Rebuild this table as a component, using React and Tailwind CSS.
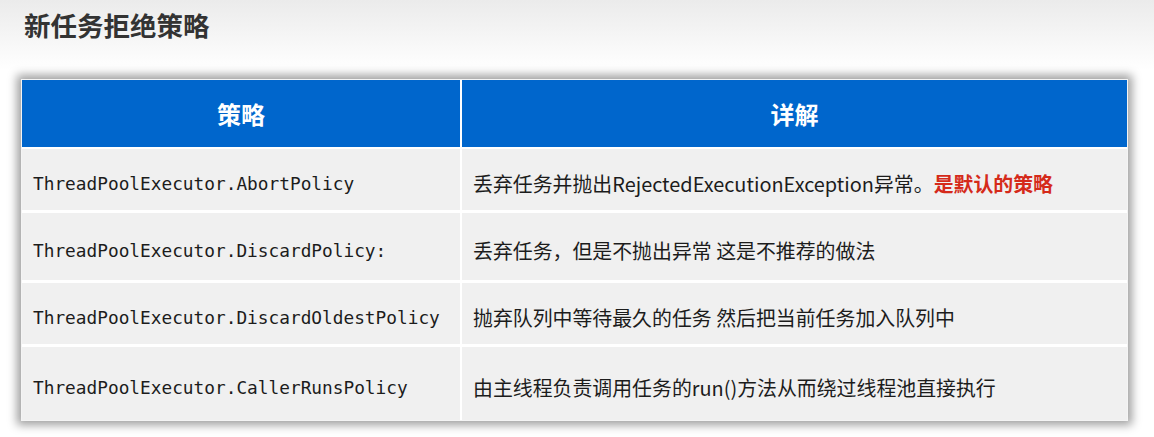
const rows = [
  {
    policy: 'ThreadPoolExecutor.AbortPolicy',
    detail: '丢弃任务并抛出RejectedExecutionException异常。',
    note: '是默认的策略',
    h: 'h-[61px]',
  },
  {
    policy: 'ThreadPoolExecutor.DiscardPolicy:',
    detail: '丢弃任务，但是不抛出异常 这是不推荐的做法',
    h: 'h-[67px]',
  },
  {
    policy: 'ThreadPoolExecutor.DiscardOldestPolicy',
    detail: '抛弃队列中等待最久的任务 然后把当前任务加入队列中',
    h: 'h-[61px]',
  },
  {
    policy: 'ThreadPoolExecutor.CallerRunsPolicy',
    detail: '由主线程负责调用任务的run()方法从而绕过线程池直接执行',
    h: 'h-[73px]',
  },
];

const cjk = "font-['Noto_Sans_CJK_SC','Noto_Sans',sans-serif]";
const mono = "font-['DejaVu_Sans_Mono','Liberation_Mono',monospace]";

export default function App() {
  return (
    <div className="w-[1154px] h-[437px] bg-gradient-to-b from-[#ebebeb] via-white via-[16%] to-white overflow-hidden">
      {/* 标题 */}
      <h1 className={`${cjk} pl-[24px] pt-[8px] text-[26.5px] leading-[34px] font-bold text-[#333333]`}>
        新任务拒绝策略
      </h1>

      {/* 表格 */}
      <div className="ml-[21px] mt-[37px] w-[1107px] border border-[#f4f4f4] bg-white shadow-[0_0_9px_4px_rgba(0,0,0,0.38)]">
        <div className="grid grid-cols-[438px_665px] gap-x-[2px]">
          <div className={`${cjk} h-[67px] bg-[#0066cc] flex items-center justify-center text-white text-[24px] font-bold`}>
            策略
          </div>
          <div className={`${cjk} h-[67px] bg-[#0066cc] flex items-center justify-center text-white text-[24px] font-bold`}>
            详解
          </div>
        </div>

        <div className="flex flex-col gap-[3px] pt-[2px]">
          {rows.map((r) => (
            <div key={r.policy} className="grid grid-cols-[438px_665px] gap-x-[2px]">
              <div className={`${r.h} ${mono} bg-[#f0f0f0] flex items-center pl-[11px] pt-[9px] text-[17.8px] text-[#1c1c1c]`}>
                {r.policy}
              </div>
              <div className={`${r.h} ${cjk} bg-[#f0f0f0] flex items-center pl-[11px] pt-[9px] text-[19.9px] text-[#1c1c1c]`}>
                {r.detail}
                {r.note && <span className="font-bold text-[#d52a1a]">{r.note}</span>}
              </div>
            </div>
          ))}
        </div>
      </div>
    </div>
  );
}
